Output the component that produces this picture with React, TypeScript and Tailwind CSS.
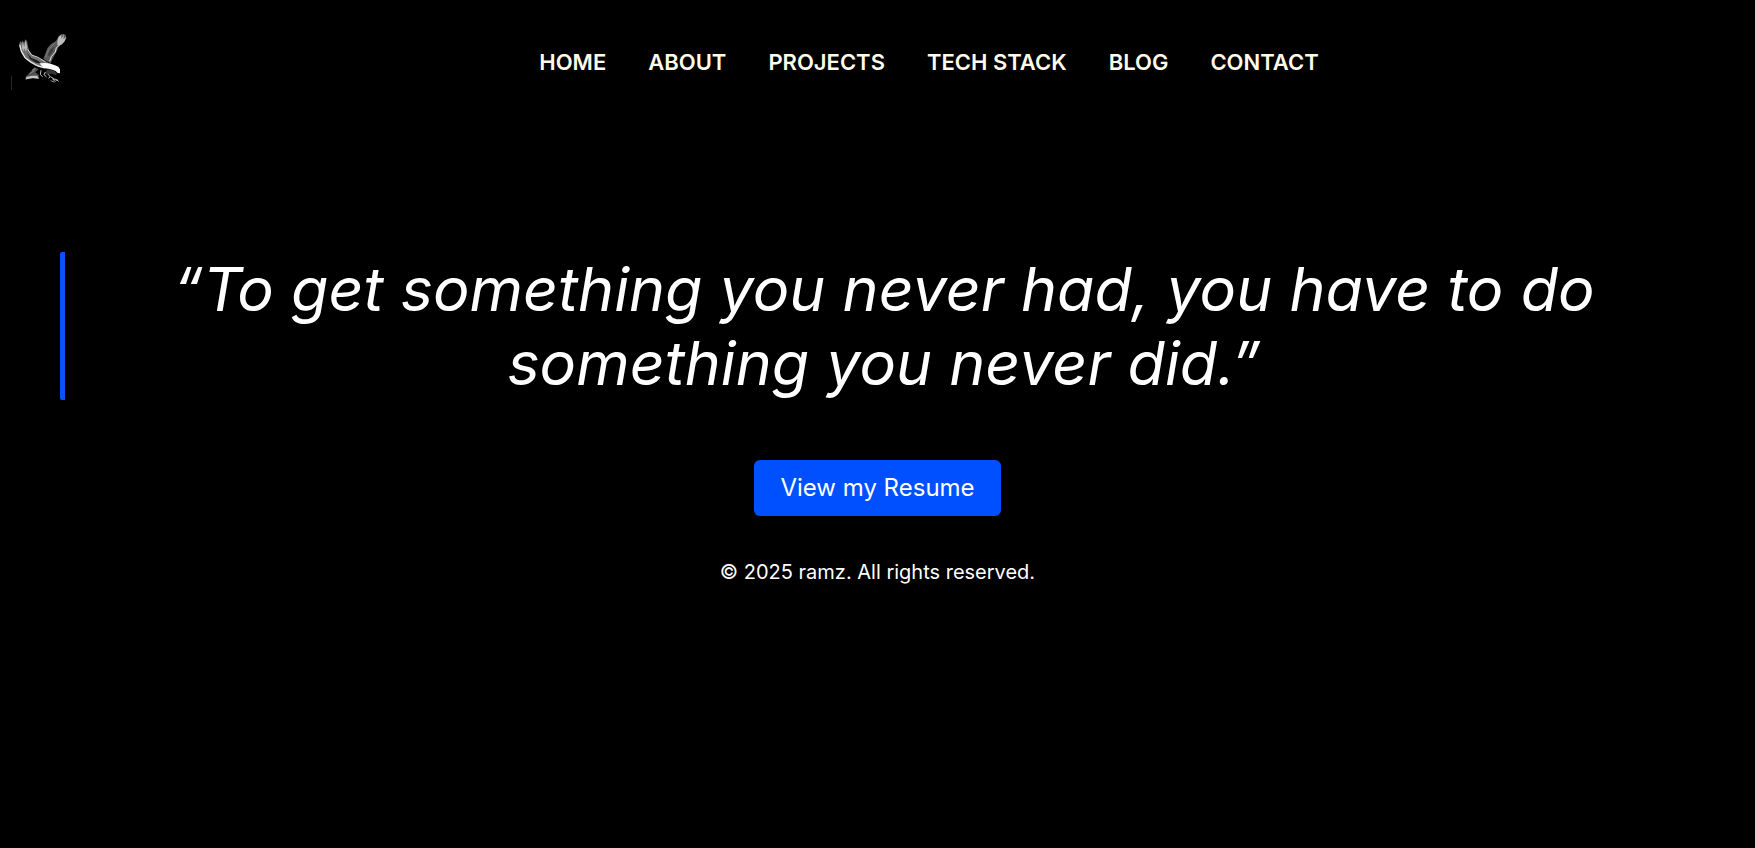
const links = [
  { label: "HOME", href: "#home" },
  { label: "ABOUT", href: "#about" },
  { label: "PROJECTS", href: "#projects" },
  { label: "TECH STACK", href: "#tech-stack" },
  { label: "BLOG", href: "#blog" },
  { label: "CONTACT", href: "#contact" },
];

function EagleLogo() {
  return (
    <svg viewBox="33 30 180 180" className="size-15" role="img" aria-label="ramz">
      <path d="M34 168V210" stroke="#4a4a4a" strokeWidth="2" />
      {/* far wing */}
      <path
        d="M130 117 137 98 143 83 153 72 168 63 175 50 183 43 191 42 197 45 199 54 195 61 188 71 180 76 175 82 170 94 164 105 157 118 152 130 141 124Z"
        fill="#5c5c5c"
      />
      <path d="M172 64 176 50 184 44 184 56 192 43 190 58 199 50 194 64 184 74 172 76Z" fill="#bdbdbd" />
      <path d="M180 74 169 83 166 96 154 110 149 124" fill="none" stroke="#e2e2e2" strokeWidth="3" />
      <path d="M137 112 146 88 164 70" fill="none" stroke="#858585" strokeWidth="2" />
      <path d="M151 89 163 80 158 94 148 108 143 106Z" fill="#3c3c3c" />
      {/* near wing */}
      <path
        d="M63 63 65 70 68 61 72 70 76 58 81 64 84 80 88 94 98 106 114 113 130 121 145 128 145 143 128 145 108 138 91 128 76 116 67 102 61 84 58 70Z"
        fill="#707070"
      />
      <path d="M62 72 66 83 68 66 73 81 77 61 82 81 78 95 73 85 70 94Z" fill="#b8b8b8" />
      <path d="M59 74 64 94 75 113 92 126 114 138 132 143" fill="none" stroke="#ededed" strokeWidth="4" />
      <path d="M83 88 95 105 114 112 137 126" fill="none" stroke="#cfcfcf" strokeWidth="3" />
      <path d="M81 98 94 114 111 121 127 132 108 128 90 117Z" fill="#1c1c1c" />
      {/* body and head */}
      <path
        d="M118 130 133 129 147 130 165 136 175 140 180 148 180 160 173 159 167 153 157 149 145 146 132 145Z"
        fill="#fafafa"
      />
      <path d="M143 148 163 152 172 161 166 166 154 161 142 165 134 158Z" fill="#333" />
      {/* tail */}
      <path d="M103 142 116 148 106 157 117 166 113 177 96 175 76 179 77 170 88 160Z" fill="#515151" />
      <path d="M79 171 96 167 112 167 118 176 99 174 78 178Z" fill="#c4c4c4" />
      <path d="M96 151 107 145M88 162 104 151" stroke="#a0a0a0" strokeWidth="2" />
      {/* talons */}
      <path
        d="M123 151 121 164 128 170M136 156 132 164 140 171M145 163 150 170 146 175M151 170 160 175 163 183M157 177 168 178 176 184"
        fill="none"
        stroke="#c0c0c0"
        strokeWidth="3"
      />
      <path d="M152 182 163 186 173 179" fill="none" stroke="#8a8a8a" strokeWidth="3" />
    </svg>
  );
}

export default function App() {
  return (
    <div className="min-h-screen bg-black font-['Inter',sans-serif] text-white">
      <header className="flex items-center pt-[30px] pl-[11px]">
        <a href="#home">
          <EagleLogo />
        </a>
        <nav className="flex flex-1 justify-center pt-1 pl-8">
          <ul className="flex gap-[42px] text-[22px] leading-8 font-semibold text-[#fffbe8]">
            {links.map((link) => (
              <li key={link.href}>
                <a href={link.href}>{link.label}</a>
              </li>
            ))}
          </ul>
        </nav>
      </header>

      <main className="flex flex-col items-center px-15 pt-[162px]">
        <blockquote className="w-full rounded-xs border-l-5 border-[#0b52f5] pr-18 pl-20 text-center text-[61px] leading-[74px] italic">
          “To get something you never had, you have to do something you never did.”
        </blockquote>
        <a
          href="#resume"
          className="mt-15 rounded-md bg-[#0050ff] px-[26px] py-3 text-[24px] leading-8"
        >
          View my Resume
        </a>
      </main>

      <footer className="pt-10 text-center text-[20px] leading-8">
        <p>© 2025 ramz. All rights reserved.</p>
      </footer>
    </div>
  );
}
